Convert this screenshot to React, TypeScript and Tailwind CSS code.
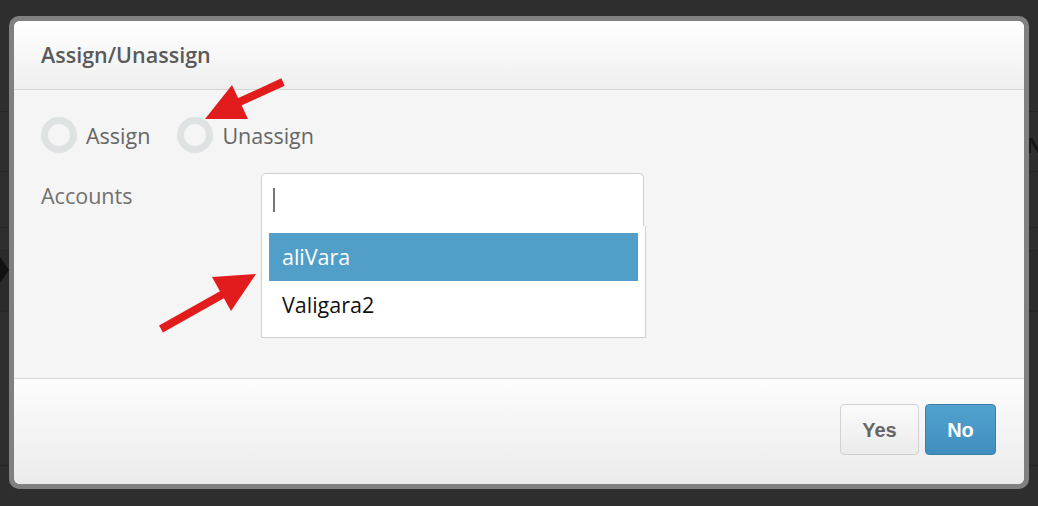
import React from "react";

function Radio({ label }: { label: string }) {
  return (
    <label className="flex items-center gap-[9px]">
      <span className="w-[36px] h-[36px] rounded-full border-[7px] border-[#dfe2e2] bg-[#f5f5f5]" />
      <span className="text-[21.5px] text-[#666] mt-[2px]">{label}</span>
    </label>
  );
}

export default function App() {
  return (
    <div
      className="relative w-[1038px] h-[506px] overflow-hidden bg-[#2e2e2e]"
      style={{ fontFamily: '"Open Sans", "Liberation Sans", sans-serif' }}
    >
      {/* background page rows */}
      <div className="flex flex-col pt-[111px]">
        <div className="h-[60px] border-t border-[#262626] flex items-center justify-end">
          <span className="text-[22px] font-bold leading-none text-[#161616] mr-[-6px] mt-[4px]">N</span>
        </div>
        <div className="h-[56px] border-t border-[#262626]" />
        <div className="h-[23px] border-t border-[#262626]" />
        <div className="h-[60px] border-t border-[#262626] bg-[#2b2b2b] relative">
          <div className="absolute left-0 top-[6px] w-0 h-0 border-y-[13px] border-y-transparent border-l-[9px] border-l-[#121212]" />
        </div>
        <div className="h-[155px] border-t-2 border-[#262626]" />
        <div className="border-t border-[#262626]" />
      </div>

      {/* modal */}
      <div className="absolute left-[9px] top-[16px] w-[1020px] h-[473px] rounded-[10px] bg-[#808080] p-[5px]">
        <div className="h-full rounded-[6px] overflow-hidden flex flex-col bg-[#f5f5f5]">
          <div className="h-[69px] shrink-0 border-b border-[#d6d6d6] bg-gradient-to-b from-[#ffffff] to-[#efefef] flex items-center px-[27px]">
            <h3 className="text-[21.5px] font-semibold text-[#5a5a5a]">Assign/Unassign</h3>
          </div>

          <div className="h-[289px] shrink-0 border-b border-[#dadada] px-[27px] pt-[27px]">
            <div className="flex items-center gap-[27px]">
              <Radio label="Assign" />
              <Radio label="Unassign" />
            </div>
            <div className="flex mt-[20px]">
              <div className="w-[220px] text-[21.5px] text-[#707070] pt-[7px]">Accounts</div>
              <div className="relative w-[383px]">
                <div className="h-[54px] bg-white border border-[#cfcfcf] rounded-t-[5px] flex items-center pl-[11px]">
                  <span className="w-[2px] h-[24px] bg-[#777]" />
                </div>
                <div className="absolute left-0 top-[53px] w-[385px] bg-white border border-[#cfcfcf] border-t-0 px-[7px] pt-[7px] pb-[8px] text-[21.5px]">
                  <div className="h-[48px] bg-[#519fc8] text-white flex items-center px-[13px]">aliVara</div>
                  <div className="h-[48px] text-[#111] flex items-center px-[13px]">Valigara2</div>
                </div>
              </div>
            </div>
          </div>

          <div className="flex-1 bg-gradient-to-b from-[#fdfdfd] to-[#ebebeb] flex justify-end items-start pt-[25px] pr-[28px] gap-[6px]">
            <button
              className="w-[79px] h-[51px] rounded-[4px] border border-[#d2d2d2] bg-gradient-to-b from-[#fbfbfb] to-[#ebebeb] text-[20px] font-bold text-[#666]"
              style={{ fontFamily: '"Liberation Sans", Arial, sans-serif' }}
            >
              Yes
            </button>
            <button
              className="w-[71px] h-[51px] rounded-[4px] border border-[#3a7fa8] bg-gradient-to-b from-[#52a2cf] to-[#3f8ebf] text-[20px] font-bold text-white"
              style={{ fontFamily: '"Liberation Sans", Arial, sans-serif' }}
            >
              No
            </button>
          </div>
        </div>
      </div>

      {/* red arrows overlay */}
      <svg className="absolute left-0 top-0 pointer-events-none" width="1038" height="506" viewBox="0 0 1038 506">
        <line x1="283" y1="82" x2="235" y2="104" stroke="#e21c1c" strokeWidth="8" />
        <polygon points="205,119 232,85 248,119" fill="#e21c1c" />
        <line x1="161" y1="329" x2="225" y2="293" stroke="#e21c1c" strokeWidth="8" />
        <polygon points="256,274 212,277 231,311" fill="#e21c1c" />
      </svg>
    </div>
  );
}
